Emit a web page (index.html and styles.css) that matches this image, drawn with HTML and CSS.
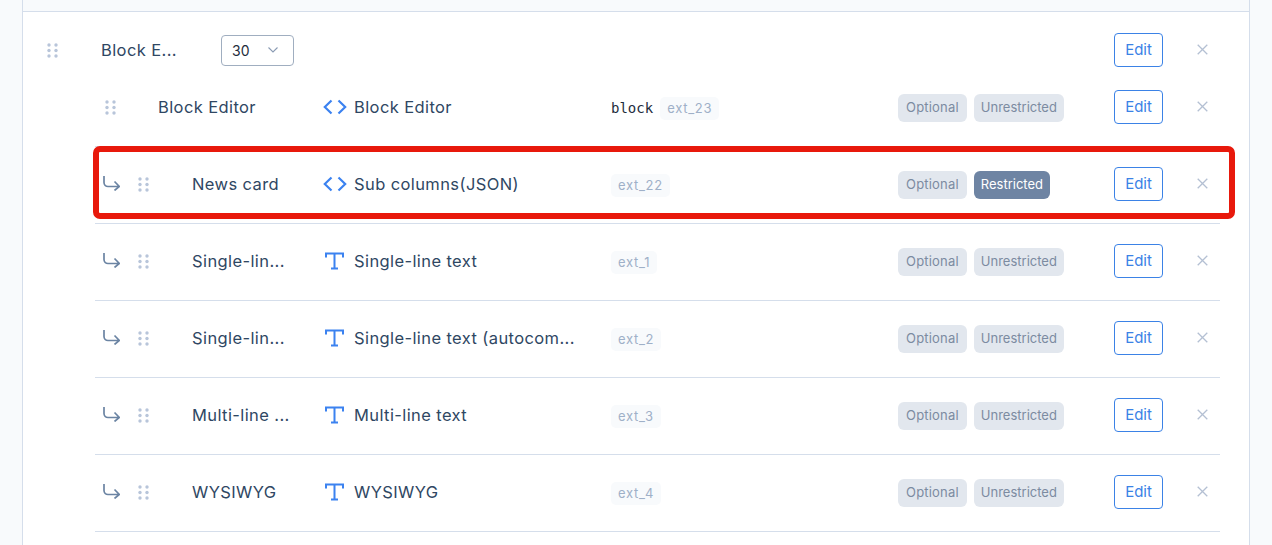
FILE: index.html
```html
<!DOCTYPE html>
<html lang="en">
<head>
    <meta charset="UTF-8">
    <title>Block Editor fields</title>
    <link rel="stylesheet" href="styles.css">
</head>
<body>
    <svg class="icon-defs" width="0" height="0">
        <symbol id="i-grip" viewBox="0 0 11 15">
            <circle cx="2" cy="2" r="1.7"/><circle cx="9" cy="2" r="1.7"/>
            <circle cx="2" cy="7.5" r="1.7"/><circle cx="9" cy="7.5" r="1.7"/>
            <circle cx="2" cy="13" r="1.7"/><circle cx="9" cy="13" r="1.7"/>
        </symbol>
        <symbol id="i-sub" viewBox="0 0 17 15">
            <path d="M1 0v6.500a4 4 0 0 0 4 4h11M11.500 5.500l4.800 5-4.800 4" fill="none" stroke="currentColor" stroke-width="1.700"/>
        </symbol>
        <symbol id="i-code" viewBox="0 0 24 16">
            <path d="M8.500 1.500 1.800 8l6.700 6.500M15.500 1.500 22.200 8l-6.700 6.500" fill="none" stroke="currentColor" stroke-width="2.200"/>
        </symbol>
        <symbol id="i-text" viewBox="0 0 19 18">
            <path d="M1 5.500V1.500h17v4M9.500 1.500v15M6 16.500h7" fill="none" stroke="currentColor" stroke-width="2"/>
        </symbol>
        <symbol id="i-close" viewBox="0 0 11 11">
            <path d="M.7.700l9.600 9.600M10.300.700.700 10.300" fill="none" stroke="currentColor" stroke-width="1.300"/>
        </symbol>
    </svg>

    <div class="panel">
        <div class="group-head">
            <svg class="grip"><use href="#i-grip"/></svg>
            <span class="group-name">Block E...</span>
            <div class="size-select">
                <span>30</span>
                <svg class="chevron" viewBox="0 0 10 6"><path d="M.5.500 5 5 9.500.500" fill="none" stroke="currentColor" stroke-width="1.100"/></svg>
            </div>
            <button class="btn-edit">Edit</button>
            <svg class="remove"><use href="#i-close"/></svg>
        </div>

        <div class="rows">
            <div class="row">
                <div class="name-cell top-level">
                    <svg class="grip"><use href="#i-grip"/></svg>
                    <span class="name">Block Editor</span>
                </div>
                <div class="type-cell"><svg class="type-icon code"><use href="#i-code"/></svg><span class="type-name">Block Editor</span></div>
                <div class="key-cell"><code class="block-tag">block</code><span class="ext">ext_23</span></div>
                <div class="tags"><span class="tag">Optional</span><span class="tag">Unrestricted</span></div>
                <button class="btn-edit">Edit</button>
                <svg class="remove"><use href="#i-close"/></svg>
            </div>

            <div class="row">
                <div class="name-cell">
                    <svg class="sub-arrow"><use href="#i-sub"/></svg>
                    <svg class="grip"><use href="#i-grip"/></svg>
                    <span class="name">News card</span>
                </div>
                <div class="type-cell"><svg class="type-icon code"><use href="#i-code"/></svg><span class="type-name">Sub columns(JSON)</span></div>
                <div class="key-cell"><span class="ext">ext_22</span></div>
                <div class="tags"><span class="tag">Optional</span><span class="tag tag-on">Restricted</span></div>
                <button class="btn-edit">Edit</button>
                <svg class="remove"><use href="#i-close"/></svg>
            </div>

            <div class="row">
                <div class="name-cell">
                    <svg class="sub-arrow"><use href="#i-sub"/></svg>
                    <svg class="grip"><use href="#i-grip"/></svg>
                    <span class="name">Single-lin...</span>
                </div>
                <div class="type-cell"><svg class="type-icon"><use href="#i-text"/></svg><span class="type-name">Single-line text</span></div>
                <div class="key-cell"><span class="ext">ext_1</span></div>
                <div class="tags"><span class="tag">Optional</span><span class="tag">Unrestricted</span></div>
                <button class="btn-edit">Edit</button>
                <svg class="remove"><use href="#i-close"/></svg>
            </div>

            <div class="row">
                <div class="name-cell">
                    <svg class="sub-arrow"><use href="#i-sub"/></svg>
                    <svg class="grip"><use href="#i-grip"/></svg>
                    <span class="name">Single-lin...</span>
                </div>
                <div class="type-cell"><svg class="type-icon"><use href="#i-text"/></svg><span class="type-name">Single-line text (autocom...</span></div>
                <div class="key-cell"><span class="ext">ext_2</span></div>
                <div class="tags"><span class="tag">Optional</span><span class="tag">Unrestricted</span></div>
                <button class="btn-edit">Edit</button>
                <svg class="remove"><use href="#i-close"/></svg>
            </div>

            <div class="row">
                <div class="name-cell">
                    <svg class="sub-arrow"><use href="#i-sub"/></svg>
                    <svg class="grip"><use href="#i-grip"/></svg>
                    <span class="name">Multi-line ...</span>
                </div>
                <div class="type-cell"><svg class="type-icon"><use href="#i-text"/></svg><span class="type-name">Multi-line text</span></div>
                <div class="key-cell"><span class="ext">ext_3</span></div>
                <div class="tags"><span class="tag">Optional</span><span class="tag">Unrestricted</span></div>
                <button class="btn-edit">Edit</button>
                <svg class="remove"><use href="#i-close"/></svg>
            </div>

            <div class="row">
                <div class="name-cell">
                    <svg class="sub-arrow"><use href="#i-sub"/></svg>
                    <svg class="grip"><use href="#i-grip"/></svg>
                    <span class="name">WYSIWYG</span>
                </div>
                <div class="type-cell"><svg class="type-icon"><use href="#i-text"/></svg><span class="type-name">WYSIWYG</span></div>
                <div class="key-cell"><span class="ext">ext_4</span></div>
                <div class="tags"><span class="tag">Optional</span><span class="tag">Unrestricted</span></div>
                <button class="btn-edit">Edit</button>
                <svg class="remove"><use href="#i-close"/></svg>
            </div>
        </div>

        <div class="highlight"></div>
    </div>
</body>
</html>
```

FILE: styles.css
```css
html, body {
    height: 545px;
    overflow: hidden;
}
body {
    margin: 0;
    padding: 0 22px;
    background-color: #f8fafc;
    color: #2f4763;
    font-family: Inter, Arial, sans-serif;
    font-size: 16.5px;
    letter-spacing: .4px;
}
.icon-defs {
    position: absolute;
}
.panel {
    position: relative;
    box-sizing: border-box;
    height: 545px;
    padding: 0 29px 0 0;
    background: linear-gradient(#f8fafc 11px, #d5deeb 11px, #d5deeb 12px, #fff 12px);
    border-left: 1px solid #d5deeb;
    border-right: 1px solid #d5deeb;
}
.group-head {
    display: flex;
    align-items: center;
    height: 34px;
    padding: 33px 12px 3px 0;
}
.group-head .grip {
    margin-left: 24px;
}
.group-name {
    width: 120px;
    margin-left: 43px;
}
.size-select {
    box-sizing: border-box;
    display: flex;
    align-items: center;
    justify-content: space-between;
    width: 73px;
    height: 31px;
    padding: 0 15px 0 10px;
    border: 1px solid #a0aec0;
    border-radius: 4px;
    color: #1f2d3d;
    font-size: 14px;
    letter-spacing: .2px;
}
.chevron {
    width: 10px;
    height: 6px;
    color: #8a9bb3;
}
.group-head .btn-edit {
    margin-left: auto;
}
.rows {
    margin-left: 72px;
}
.row {
    display: grid;
    grid-template-columns: 228px 288px 287px 216px 49px 1fr;
    align-items: center;
    height: 74px;
    padding-bottom: 2px;
    border-bottom: 1px solid #d5deeb;
}
.name-cell {
    display: flex;
    align-items: center;
    padding-left: 8px;
}
.name-cell.top-level {
    padding-left: 10px;
}
.name-cell.top-level .name {
    margin-left: 42px;
    width: 120px;
}
.sub-arrow {
    flex: none;
    width: 17px;
    height: 15px;
    margin: 0 18px 1px 0;
    color: #6b84a3;
}
.grip {
    flex: none;
    width: 11px;
    height: 15px;
    fill: #b8c5da;
}
.name {
    width: 110px;
    margin-left: 43px;
    white-space: nowrap;
}
.type-cell {
    display: flex;
    align-items: center;
    min-width: 0;
}
.type-icon {
    flex: none;
    width: 19px;
    height: 18px;
    margin: 0 10px 0 2px;
    color: #3b82f0;
}
.type-icon.code {
    width: 24px;
    height: 16px;
    margin: 0 7px 0 0;
}
.type-name {
    white-space: nowrap;
}
.key-cell {
    display: flex;
    align-items: center;
    margin-top: 2px;
}
.block-tag {
    margin-right: 7px;
    color: #1f2d3d;
    font-family: "DejaVu Sans Mono", monospace;
    font-size: 14px;
    letter-spacing: 0;
}
.ext {
    padding: 3px 7px;
    border-radius: 5px;
    background-color: #f8fafc;
    color: #9fb0c8;
    font-size: 13px;
    letter-spacing: .7px;
    line-height: 17px;
}
.tags {
    display: flex;
    gap: 7px;
    margin-top: 2px;
}
.tag {
    padding: 0 7px 2px;
    border-radius: 6px;
    background-color: #e2e7ee;
    color: #7c8ba1;
    font-size: 13px;
    letter-spacing: 0;
    line-height: 26px;
}
.tag:first-child {
    padding: 0 8px 2px;
    letter-spacing: .2px;
}
.tag-on {
    background-color: #6e84a3;
    color: #fff;
}
.btn-edit {
    box-sizing: border-box;
    width: 49px;
    height: 34px;
    padding: 0 0 1px;
    border: 1px solid #3b82e6;
    border-radius: 4px;
    background: #fff;
    color: #3b82e6;
    font-family: Inter, Arial, sans-serif;
    font-size: 15px;
    letter-spacing: 0;
    cursor: pointer;
}
.remove {
    flex: none;
    width: 11px;
    height: 11px;
    margin: 0 0 2px 34px;
    color: #b4c0d3;
}
/* red annotation box around the News card row */
.highlight {
    position: absolute;
    left: 70px;
    top: 146px;
    width: 1142px;
    height: 73px;
    box-sizing: border-box;
    border: 6px solid #e8190c;
    border-radius: 7px;
}
```
